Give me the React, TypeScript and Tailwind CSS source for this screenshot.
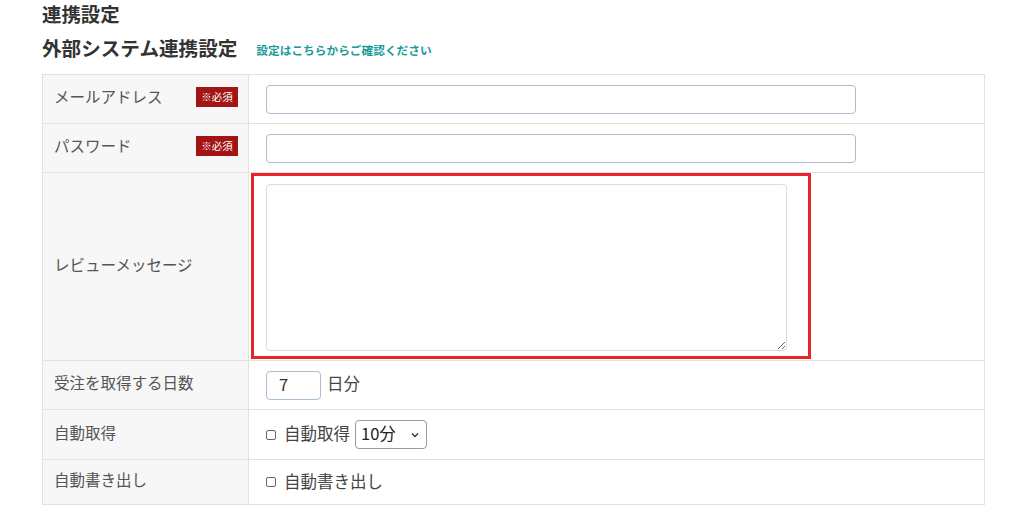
import type { ReactNode } from 'react'

const FONT = '"Noto Sans CJK JP", "Noto Sans", sans-serif'

function Required() {
  return (
    <span className="ml-auto mr-[10px] flex h-[20px] w-[42px] items-center justify-center bg-[#a31414] text-[10.5px] leading-none text-white">
      ※必須
    </span>
  )
}

function Row({
  label,
  required,
  h,
  last,
  align = 'items-center',
  children,
}: {
  label: string
  required?: boolean
  h: string
  last?: boolean
  align?: string
  children: ReactNode
}) {
  return (
    <div className={`flex ${h} ${last ? '' : 'border-b border-[#e2e2e2]'}`}>
      <div className="flex w-[206px] shrink-0 items-center border-r border-[#e2e2e2] bg-[#f7f7f7] pb-[4px] pl-[11px] text-[15.5px] text-[#555]">
        <span>{label}</span>
        {required && <Required />}
      </div>
      <div className={`flex flex-1 ${align} bg-white`}>{children}</div>
    </div>
  )
}

function Check({ label }: { label: string }) {
  return (
    <label className="flex items-center gap-[8px] text-[16.5px] text-[#444]">
      <span className="h-[10px] w-[10px] rounded-[2px] border border-[#666] bg-white" />
      <span className="pb-[2px]">{label}</span>
    </label>
  )
}

export default function App() {
  return (
    <div className="min-h-[521px] bg-white pl-[42px]" style={{ fontFamily: FONT }}>
      <h2 className="text-[19.4px] font-bold leading-[28px] text-[#333]">連携設定</h2>
      <div className="mt-[6px] flex h-[28px] items-center">
        <h3 className="text-[19.6px] font-bold leading-[28px] text-[#333]">外部システム連携設定</h3>
        <a className="ml-[19px] mt-[4px] text-[11.7px] font-bold text-[#1a9b9b]">
          設定はこちらからご確認ください
        </a>
      </div>

      <div className="mt-[12px] w-[943px] border border-[#e2e2e2]">
        <Row label="メールアドレス" required h="h-[49px]">
          <input
            type="text"
            className="ml-[17px] h-[29px] w-[590px] rounded-[4px] border border-[#a9bdd3] bg-white outline-none"
          />
        </Row>
        <Row label="パスワード" required h="h-[49px]">
          <input
            type="password"
            className="ml-[17px] h-[29px] w-[590px] rounded-[4px] border border-[#a9bdd3] bg-white outline-none"
          />
        </Row>
        <Row label="レビューメッセージ" h="h-[188px]" align="items-start">
          <div className="ml-[2px] h-[186px] w-[560px] border-[3px] border-[#e8232c] pl-[12px] pt-[8px]">
            <textarea className="h-[167px] w-[521px] resize rounded-[4px] border border-[#dcdcdc] bg-white outline-none" />
          </div>
        </Row>
        <Row label="受注を取得する日数" h="h-[49px]">
          <input
            type="text"
            defaultValue="7"
            className="ml-[17px] h-[29px] w-[55px] rounded-[4px] border border-[#a9bdd3] bg-white pb-[2px] pl-[12px] text-[16.5px] text-[#333] outline-none"
          />
          <span className="ml-[6px] pb-[3px] text-[16.5px] text-[#444]">日分</span>
        </Row>
        <Row label="自動取得" h="h-[50px]">
          <div className="ml-[17px] flex items-center gap-[5px]">
            <Check label="自動取得" />
            <div className="relative h-[29px] w-[72px]">
              <select className="h-full w-full appearance-none rounded-[4px] border border-[#9a9a9a] bg-white pb-[2px] pl-[5px] text-[16.5px] text-[#222] outline-none">
                <option>10分</option>
              </select>
              <svg
                className="pointer-events-none absolute right-[8px] top-[12px]"
                width="8"
                height="6"
                viewBox="0 0 8 6"
              >
                <path d="M1 1.5 L4 4.5 L7 1.5" fill="none" stroke="#333" strokeWidth="1.3" />
              </svg>
            </div>
          </div>
        </Row>
        <Row label="自動書き出し" h="h-[44px]" last>
          <div className="ml-[17px]">
            <Check label="自動書き出し" />
          </div>
        </Row>
      </div>
    </div>
  )
}
